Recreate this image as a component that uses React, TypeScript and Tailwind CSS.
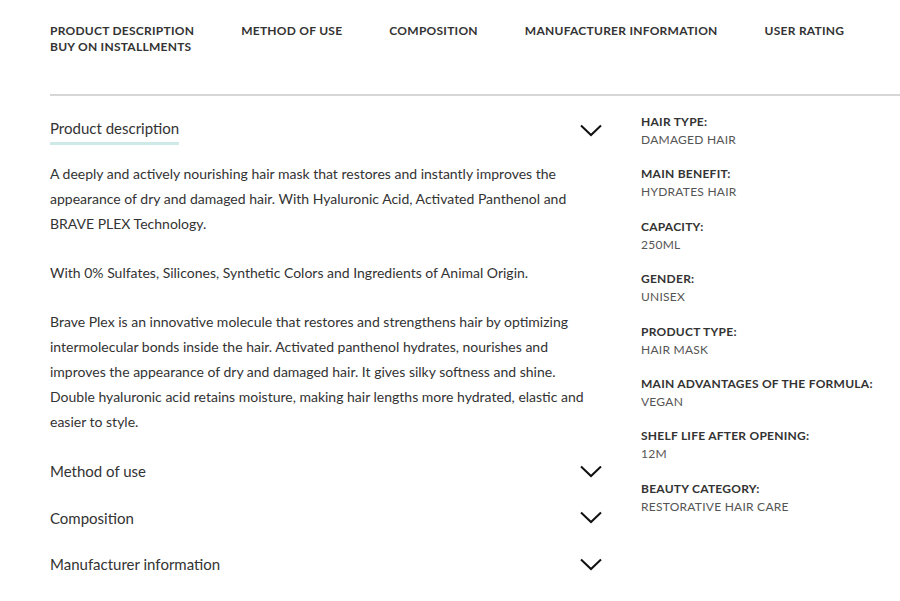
import React from "react";

const tabs = [
  ["PRODUCT DESCRIPTION", "BUY ON INSTALLMENTS"],
  ["METHOD OF USE"],
  ["COMPOSITION"],
  ["MANUFACTURER INFORMATION"],
  ["USER RATING"],
];

const specs = [
  { label: "HAIR TYPE:", value: "DAMAGED HAIR" },
  { label: "MAIN BENEFIT:", value: "HYDRATES HAIR" },
  { label: "CAPACITY:", value: "250ML" },
  { label: "GENDER:", value: "UNISEX" },
  { label: "PRODUCT TYPE:", value: "HAIR MASK" },
  { label: "MAIN ADVANTAGES OF THE FORMULA:", value: "VEGAN" },
  { label: "SHELF LIFE AFTER OPENING:", value: "12M" },
  { label: "BEAUTY CATEGORY:", value: "RESTORATIVE HAIR CARE" },
];

const Chevron = () => (
  <svg width="22" height="13" viewBox="0 0 22 13" fill="none" className="mr-[3px]">
    <polyline points="1,1.5 11,11 21,1.5" stroke="#111" strokeWidth="2" />
  </svg>
);

const CollapsedRow = ({ title }: { title: string }) => (
  <div className="flex items-center justify-between h-[46.5px]">
    <span className="text-[15px] leading-[20px]">{title}</span>
    <Chevron />
  </div>
);

export default function App() {
  return (
    <div className="w-[900px] h-[601px] overflow-hidden bg-white pl-[50px] text-[#333] font-['Lato',sans-serif]">
      <nav className="flex gap-[47px] pt-[23px] h-[94px] text-[12px] font-bold leading-[16px] tracking-[0.25px]">
        {tabs.map((t) => (
          <div key={t[0]} className="flex flex-col">
            {t.map((line) => (
              <span key={line}>{line}</span>
            ))}
          </div>
        ))}
      </nav>
      <div className="border-t-2 border-[#d6d6d6]" />

      <div className="flex">
        <div className="w-[555px]">
          <div className="flex items-start justify-between pt-[20px]">
            <div className="inline-block border-b-[3px] border-[#cdeae6] pb-[2px]">
              <span className="text-[15px] leading-[20px]">Product description</span>
            </div>
            <div className="pt-[8px]">
              <Chevron />
            </div>
          </div>
          <div className="mt-[16px] w-[545px] text-[14px] leading-[25px] flex flex-col gap-[24px]">
            <p>
              A deeply and actively nourishing hair mask that restores and instantly improves the
              appearance of dry and damaged hair. With Hyaluronic Acid, Activated Panthenol and
              BRAVE PLEX Technology.
            </p>
            <p>With 0% Sulfates, Silicones, Synthetic Colors and Ingredients of Animal Origin.</p>
            <p>
              Brave Plex is an innovative molecule that restores and strengthens hair by optimizing
              intermolecular bonds inside the hair. Activated panthenol hydrates, nourishes and
              improves the appearance of dry and damaged hair. It gives silky softness and shine.
              Double hyaluronic acid retains moisture, making hair lengths more hydrated, elastic and
              easier to style.
            </p>
          </div>
          <div className="mt-[14px]">
            <CollapsedRow title="Method of use" />
            <CollapsedRow title="Composition" />
            <CollapsedRow title="Manufacturer information" />
          </div>
        </div>

        <div className="ml-[36px] pt-[17px] flex flex-col gap-[16.4px] text-[12px] leading-[18px] tracking-[0.25px]">
          {specs.map((s) => (
            <div key={s.label}>
              <div className="font-bold text-[#333]">{s.label}</div>
              <div className="text-[#555]">{s.value}</div>
            </div>
          ))}
        </div>
      </div>
    </div>
  );
}
